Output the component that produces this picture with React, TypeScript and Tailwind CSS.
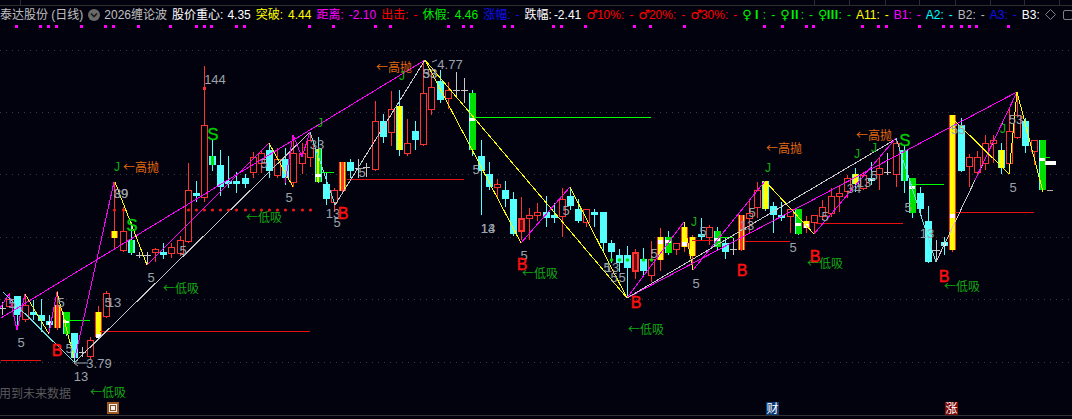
import React from "react";

type Kind = "r" | "c" | "x" | "w" | "Y" | "g" | "y" | "yc" | "cg" | "R" | "gy";
type Candle = [number, number, number, number, number, Kind, number?];

const RED = "#ff3232";
const CYAN = "#54ffff";
const YEL = "#ffff00";
const GRN = "#00e000";
const MAG = "#ff00ff";
const GREY = "#c8c8c8";

const candles: Candle[] = [
  [2, 302, 308, 308, 315, "x"], [9, 293, 299, 306, 308, "r"], [17, 296, 296, 315, 330, "c"], [25, 295, 305, 319, 322, "r"],
  [33, 300, 312, 315, 320, "c"], [41, 299, 315, 321, 332, "c"], [49, 315, 321, 325, 333, "w"], [57, 291, 305, 328, 330, "Y"],
  [66, 312, 312, 334, 336, "g", 320], [74, 333, 333, 358, 362, "c"], [82, 347, 352, 352, 357, "x"], [90, 337, 340, 356, 360, "r"],
  [98, 306, 312, 337, 340, "y", 334], [106, 291, 293, 316, 318, "r"], [114, 182, 231, 238, 248, "y"], [123, 207, 231, 250, 252, "r"],
  [131, 222, 240, 253, 255, "cg"], [139, 252, 255, 255, 258, "x"], [147, 252, 255, 255, 264, "x"], [155, 248, 249, 252, 262, "r"],
  [163, 243, 252, 255, 259, "c"], [171, 243, 247, 253, 258, "r"], [180, 236, 240, 253, 256, "r"], [188, 163, 190, 241, 243, "r"],
  [196, 181, 193, 196, 202, "c"], [204, 66, 125, 197, 202, "r"], [212, 140, 156, 165, 171, "cg"], [220, 150, 165, 187, 196, "c"],
  [228, 156, 181, 184, 188, "c"], [236, 172, 181, 184, 193, "c"], [245, 174, 178, 184, 188, "c"], [253, 152, 157, 172, 178, "r"],
  [261, 150, 153, 163, 173, "r"], [269, 143, 150, 171, 178, "c"], [277, 148, 159, 175, 178, "r"], [285, 148, 159, 178, 185, "c"],
  [293, 135, 153, 182, 187, "r"], [302, 143, 153, 163, 174, "r"], [310, 132, 140, 157, 167, "r"], [318, 137, 149, 182, 183, "gy", 174],
  [326, 173, 184, 199, 205, "c"], [334, 188, 190, 202, 212, "r"], [342, 162, 162, 191, 192, "Y"], [350, 159, 162, 171, 178, "c"],
  [358, 159, 168, 168, 178, "x"], [366, 163, 167, 167, 177, "x"], [375, 101, 121, 169, 171, "r"], [383, 114, 121, 137, 143, "c"],
  [391, 91, 109, 132, 146, "r"], [399, 90, 106, 150, 156, "yc"], [407, 119, 143, 153, 156, "r"], [415, 121, 131, 140, 150, "c"],
  [423, 60, 93, 144, 146, "r"], [431, 70, 87, 109, 115, "r"], [440, 70, 81, 100, 103, "c"], [448, 82, 90, 98, 109, "r"],
  [456, 72, 90, 90, 98, "x"], [464, 78, 90, 90, 103, "x"], [472, 90, 93, 150, 156, "g", 118], [481, 140, 156, 171, 215, "c"],
  [489, 162, 174, 187, 190, "c"], [497, 179, 184, 187, 199, "r"], [505, 181, 190, 199, 207, "c"], [513, 192, 199, 234, 236, "c"],
  [521, 197, 218, 232, 240, "R"], [529, 208, 215, 218, 240, "r"], [537, 203, 212, 215, 221, "r"], [546, 196, 212, 218, 227, "c"],
  [554, 203, 215, 218, 223, "c"], [562, 188, 199, 216, 237, "r"], [570, 187, 196, 206, 210, "c"], [578, 199, 209, 221, 223, "c"],
  [586, 209, 209, 222, 227, "r"], [594, 209, 212, 215, 227, "c"], [603, 212, 212, 243, 253, "c"], [611, 240, 243, 252, 263, "c"],
  [619, 249, 255, 263, 272, "c"], [627, 246, 255, 268, 298, "c"], [635, 249, 252, 272, 279, "R"], [643, 248, 259, 271, 275, "c"],
  [651, 241, 259, 275, 282, "r"], [660, 228, 237, 260, 271, "y", 240], [668, 231, 237, 253, 255, "g", 240], [676, 243, 243, 249, 255, "r"],
  [684, 222, 227, 247, 252, "y", 242], [692, 235, 237, 256, 270, "y"], [701, 218, 234, 237, 240, "c"], [709, 225, 227, 237, 245, "r"],
  [717, 227, 231, 247, 250, "g", 238], [725, 237, 243, 252, 259, "c"], [733, 238, 249, 249, 255, "x"], [741, 215, 215, 250, 251, "Y"],
  [749, 200, 213, 218, 233, "r"], [757, 182, 190, 207, 218, "r"], [765, 181, 181, 209, 211, "yc"], [773, 202, 206, 215, 233, "c"],
  [781, 202, 215, 218, 221, "c"], [790, 209, 209, 216, 233, "r"], [798, 209, 209, 234, 235, "g", 223], [806, 216, 221, 228, 233, "y", 224],
  [814, 215, 215, 222, 234, "r"], [822, 200, 207, 216, 220, "r"], [831, 188, 196, 213, 217, "r"], [839, 185, 193, 196, 212, "r"],
  [847, 175, 178, 191, 198, "r"], [855, 168, 174, 184, 192, "yc"], [863, 172, 175, 188, 190, "r"], [871, 162, 178, 181, 185, "w"],
  [879, 158, 168, 174, 190, "r"], [887, 153, 172, 172, 175, "x"], [896, 138, 143, 174, 187, "r"], [904, 145, 150, 181, 193, "cg"],
  [912, 178, 178, 213, 218, "g", 186], [920, 187, 193, 209, 215, "c"], [928, 206, 221, 262, 263, "c"], [936, 240, 250, 250, 262, "x"],
  [944, 237, 242, 246, 255, "w"], [952, 115, 115, 250, 252, "y", 214], [961, 118, 125, 171, 172, "c"], [969, 154, 157, 166, 187, "r"],
  [977, 151, 157, 172, 174, "r"], [985, 135, 143, 163, 170, "r"], [993, 135, 140, 143, 163, "r"], [1001, 143, 150, 168, 174, "yc"],
  [1009, 108, 131, 163, 165, "r"], [1017, 92, 115, 137, 139, "r"], [1025, 118, 121, 146, 153, "c"], [1034, 140, 140, 151, 165, "r"],
  [1042, 140, 140, 190, 191, "g", 158],
];

const lines: [string, string][] = [
  ["0,308 9,294 17,330 25,294", MAG],
  ["25,294 49,334", YEL], ["49,333 57,292", MAG], ["57,292 74,358", YEL],
  ["3,292 74,362", "#6fe0e0"],
  ["1,318 425,60", MAG],
  ["75,358 114,182", MAG],
  ["115,182 147,265", YEL],
  ["75,362 310,132", GREY],
  ["147,265 269,143", MAG],
  ["269,143 293,187", YEL],
  ["285,183 293,135 302,157 310,132", MAG],
  ["310,132 335,205", "#6fe0e0"],
  ["335,205 425,60", GREY],
  ["425,60 521,243", YEL],
  ["425,60 627,298", YEL],
  ["521,243 570,187", MAG],
  ["570,187 627,298", YEL],
  ["627,298 684,222", MAG],
  ["684,222 693,270", YEL],
  ["693,270 765,181", MAG],
  ["627,298 1017,92", MAG],
  ["627,298 896,139", GREY],
  ["765,181 814,234", YEL],
  ["814,234 896,138", MAG],
  ["896,138 936,262", "#6fe0e0"],
  ["936,262 1017,92", GREY],
  ["975,180 1017,92", MAG],
  ["1017,92 1043,192", YEL],
  ["952,118 1009,174", YEL],
  ["1009,174 1017,92", YEL],
];

const HRED = "#e81010";
const HGRN = "#00ff00";
const hlines: [number, number, number, string][] = [
  [1, 41, 360, HRED], [100, 310, 331, HRED], [66, 90, 320, HGRN], [322, 334, 172, HGRN],
  [347, 464, 179, HRED], [472, 651, 117, HGRN], [692, 713, 240, HRED], [745, 790, 241, HRED],
  [720, 733, 237, HGRN], [816, 903, 223, HRED],
  [912, 944, 184, HGRN], [955, 1034, 212, HRED], [1045, 1050, 157, HGRN], [1047, 1053, 190, "#b0b0b0"],
];

const nums: [string, number, number][] = [
  ["5", 21, 342], ["5", 12, 303], ["5", 61, 302], ["5", 69, 348], ["13", 81, 376], ["3.79", 99, 363], ["13", 114, 302], ["5", 108, 302],
  ["5", 151, 277], ["5", 183, 250], ["144", 215, 79], ["39", 121, 193], ["89", 121, 193], ["5", 264, 163], ["33", 317, 144], ["5", 289, 197],
  ["13", 333, 213], ["5", 337, 222], ["4.77", 450, 64], ["33", 430, 73], ["53", 430, 73], ["5", 362, 172], ["5", 476, 169],
  ["13", 488, 228], ["14", 488, 228], ["5", 566, 210], ["5", 524, 255], ["5", 607, 267], ["13", 612, 267], ["5", 614, 277], ["5", 622, 277],
  ["5", 654, 253], ["5", 703, 231], ["5", 696, 283], ["5", 752, 212], ["13", 747, 225], ["5", 793, 247], ["5", 825, 216],
  ["34", 854, 188], ["13", 864, 182], ["5", 874, 175], ["5", 908, 207], ["13", 927, 233], ["55", 958, 129], ["5", 1013, 187], ["53", 1016, 119],
];

const bees: [number, number][] = [[57, 350], [343, 213], [522, 264], [636, 302], [742, 270], [815, 256], [944, 276]];
const esses: [number, number][] = [[132, 225], [213, 134], [905, 140]];

const js: [number, number][] = [[117, 166], [320, 122], [402, 75], [694, 221], [768, 167], [857, 153], [874, 147], [1003, 128]];

const cjk: [string, number, number, string][] = [
  ["←低吸", 163, 289, "#12a812"], ["←低吸", 90, 393, "#12a812"], ["←高抛", 123, 168, "#e06a10"], ["←低吸", 246, 218, "#12a812"],
  ["←高抛", 376, 68, "#e06a10"], ["←低吸", 522, 274, "#12a812"], ["←低吸", 628, 330, "#12a812"], ["←高抛", 766, 149, "#e06a10"],
  ["←低吸", 807, 264, "#12a812"], ["←高抛", 856, 136, "#e06a10"], ["←低吸", 944, 287, "#12a812"],
];

const redDots = [114, 123, 188, 196, 204, 212, 220, 228, 236, 245, 253, 261, 269, 277, 285, 293, 302, 310];
const greenDots = [611, 619, 627, 643, 651];
const grid = [50, 112, 174, 237, 299, 362];

const topDots = [
  ...[47, 117, 140, 163, 236, 306, 329, 402, 494, 568, 591, 614, 684, 710, 898, 968, 1088, 1134, 1300, 1346, 1369, 1465, 1488].map((v) => v / 2.904),
  ...[62, 85, 155, 297, 344, 440, 675, 725, 795, 817, 959, 1005, 1028, 1125, 1193, 1218, 1245, 1268, 1290, 1383].map((v) => 532 + v / 2.904),
];
const ticks = [20, 814, 849, 885, 919, 955, 990, 1024, 1059];

function CandleMark({ c }: { c: Candle }) {
  const [x, h, t, b, l, k, w] = c;
  const left = x - 3;
  const ht = Math.max(b - t, 1);
  const wick = k === "r" || k === "R" || k === "Y" || k === "y" ? RED : k === "x" ? GREY : CYAN;
  const body = () => {
    switch (k) {
      case "x":
        return <rect x={left} y={t} width={7} height={1} fill={GREY} />;
      case "r":
        return <rect x={left + 0.5} y={t + 0.5} width={6} height={ht} fill="#02020e" stroke={RED} />;
      case "c":
        return <rect x={left} y={t} width={7} height={ht} fill={CYAN} />;
      case "w":
        return (
          <>
            <rect x={left} y={t} width={7} height={ht} fill={CYAN} />
            <rect x={left + 2} y={t + 1} width={3} height={Math.max(ht - 1, 1)} fill="#ffffff" />
          </>
        );
      case "Y":
        return (
          <>
            <rect x={left} y={t} width={7} height={ht} fill={RED} />
            <rect x={left + 1} y={t} width={1} height={ht} fill={YEL} />
            <rect x={left + 5} y={t} width={1} height={ht} fill={YEL} />
          </>
        );
      case "R":
        return (
          <>
            <rect x={left} y={t} width={7} height={ht} fill={RED} />
            <rect x={left + 2} y={t + 2} width={3} height={ht - 4} fill="#700808" />
          </>
        );
      case "y":
        return (
          <>
            <rect x={left} y={t} width={7} height={ht} fill={RED} />
            <rect x={left + 1} y={t} width={5} height={ht} fill={YEL} />
            {w ? <rect x={left + 1} y={w} width={5} height={4} fill="#ffffff" /> : null}
          </>
        );
      case "yc":
        return (
          <>
            <rect x={left} y={t} width={7} height={ht} fill={CYAN} />
            <rect x={left + 1} y={t} width={5} height={ht} fill={YEL} />
          </>
        );
      case "cg":
        return (
          <>
            <rect x={left} y={t} width={7} height={ht} fill={CYAN} />
            <rect x={left + 2} y={t} width={3} height={ht} fill={GRN} />
          </>
        );
      case "g":
        return (
          <>
            <rect x={left} y={t} width={7} height={ht} fill={CYAN} />
            <rect x={left + 1} y={t} width={6} height={ht} fill={GRN} />
            {w ? <rect x={left} y={w} width={6} height={3} fill="#ffffff" /> : null}
          </>
        );
      case "gy":
        return (
          <>
            <rect x={left} y={t} width={7} height={ht} fill={CYAN} />
            <rect x={left + 1} y={t} width={5} height={ht} fill={GRN} />
            <rect x={left + 2} y={t} width={2} height={ht} fill={YEL} />
            {w ? <rect x={left} y={w} width={6} height={3} fill="#ffffff" /> : null}
          </>
        );
    }
  };
  return (
    <g>
      <rect x={x} y={h} width={1} height={l - h} fill={wick} />
      {body()}
    </g>
  );
}

function Label({ cls, children }: { cls: string; children: React.ReactNode }) {
  return <span className={`whitespace-pre ${cls}`}>{children}</span>;
}

function Sym({ children }: { children: React.ReactNode }) {
  return <span className="font-['DejaVu_Sans'] text-[13px] mr-[-1px]">{children}</span>;
}

function Roman({ children }: { children: React.ReactNode }) {
  return <span className="font-['Noto_Sans_CJK_SC'] font-bold">{children}</span>;
}

export default function App() {
  return (
    <div className="w-[1072px] h-[419px] bg-[#02020e] overflow-hidden flex flex-col font-['Liberation_Sans','Noto_Sans_CJK_SC',sans-serif] text-[12px] leading-none">
      <div className="relative h-[30px] shrink-0 pt-[5px]">
        <svg className="absolute left-0 top-0" width={1072} height={30}>
          <g shapeRendering="crispEdges">
            <rect x={0} y={5} width={1072} height={1} fill="#2e2e2e" />
            {ticks.map((x) => (
              <rect key={x} x={x} y={0} width={1} height={5} fill="#2e2e2e" />
            ))}
            {topDots.map((x, i) => (
              <rect key={i} x={Math.round(x) - 1} y={25} width={3} height={3} fill="#ff00ff" />
            ))}
          </g>
        </svg>
        <div className="relative flex items-center gap-[5px] h-[19px] whitespace-nowrap">
          <Label cls="text-[#c0c0c0]">泰达股份 (日线)</Label>
          <svg width={12} height={12} viewBox="0 0 12 12" className="shrink-0 mr-[-1px]">
            <circle cx={6} cy={6} r={6} fill="#6a6a6a" />
            <path d="M3 4.5 L6 7.5 L9 4.5" stroke="#1a1a1a" strokeWidth={1.6} fill="none" />
          </svg>
          <Label cls="text-[#c0c0c0]">2026缠论波</Label>
          <Label cls="text-white">股价重心:</Label>
          <Label cls="text-white ml-[-1px]">4.35</Label>
          <Label cls="text-[#ffff00]">突破:</Label>
          <Label cls="text-[#ffff00]">4.44</Label>
          <Label cls="text-[#ff00ff]">距离:</Label>
          <Label cls="text-[#ff00ff]">-2.10</Label>
          <Label cls="text-[#ff0000]">出击:</Label>
          <Label cls="text-[#ff0000]">-</Label>
          <Label cls="text-[#00ee00]">休假:</Label>
          <Label cls="text-[#00ee00]">4.46</Label>
          <Label cls="text-[#1010e8]">涨幅:</Label>
          <Label cls="text-[#1010e8]">-</Label>
          <Label cls="text-white">跌幅:</Label>
          <Label cls="text-white ml-[-3px]">-2.41</Label>
          <Label cls="text-[#ff0000]"><Sym>♂</Sym>10%:</Label>
          <Label cls="text-[#ff0000]">-</Label>
          <Label cls="text-[#ff0000]"><Sym>♂</Sym>20%:</Label>
          <Label cls="text-[#ff0000]">-</Label>
          <Label cls="text-[#ff0000]"><Sym>♂</Sym>30%:</Label>
          <Label cls="text-[#ff0000]">-</Label>
          <Label cls="text-[#00ee00] w-[24px]"><Sym>♀</Sym><Roman>Ⅰ</Roman>:</Label>
          <Label cls="text-[#00ee00]">-</Label>
          <Label cls="text-[#00ee00] w-[24px]"><Sym>♀</Sym><Roman>Ⅱ</Roman>:</Label>
          <Label cls="text-[#00ee00]">-</Label>
          <Label cls="text-[#00ee00] w-[26px]"><Sym>♀</Sym><Roman>Ⅲ</Roman>:</Label>
          <Label cls="text-[#00ee00]">-</Label>
          <Label cls="text-[#ffff00]">A11:</Label>
          <Label cls="text-[#ffff00]">-</Label>
          <Label cls="text-[#ff00ff]">B1:</Label>
          <Label cls="text-[#ff00ff]">-</Label>
          <Label cls="text-[#00ffff]">A2:</Label>
          <Label cls="text-[#00ffff]">-</Label>
          <Label cls="text-[#b8b8b8]">B2:</Label>
          <Label cls="text-[#b8b8b8]">-</Label>
          <Label cls="text-[#1010e8]">A3:</Label>
          <Label cls="text-[#1010e8]">-</Label>
          <Label cls="text-white">B3:</Label>
          <svg width={11} height={11} viewBox="0 0 11 11" className="shrink-0">
            <path d="M5.5 0.5 L10.5 5.5 L5.5 10.5 L0.5 5.5 Z" stroke="#808080" fill="none" />
          </svg>
          <div className="ml-[2px] w-[10px] h-[10px] rounded-[2px] border border-[#808080] shrink-0" />
        </div>
      </div>
      <svg className="flex-1 block" width={1072} height={389} viewBox="0 30 1072 389">
        <g shapeRendering="crispEdges">
          {grid.map((y) => (
            <line key={y} x1={0} x2={1072} y1={y + 0.5} y2={y + 0.5} stroke="#3c3c3c" strokeDasharray="1 5" />
          ))}
          {candles.map((c, i) => (
            <CandleMark key={i} c={c} />
          ))}
          {hlines.map(([a, b, y, col], i) => (
            <rect key={i} x={a} y={y} width={b - a} height={1} fill={col} />
          ))}
          {lines.map(([pts, col], i) => (
            <polyline key={i} points={pts} fill="none" stroke={col} strokeWidth={1} />
          ))}
          <rect x={1045} y={161} width={11} height={4} fill="#ffffff" />
          <rect x={203} y={87} width={3} height={3} fill={RED} />
        </g>
        {redDots.map((x) => (
          <circle key={x} cx={x + 0.5} cy={210} r={1.6} fill="#f01818" />
        ))}
        {greenDots.map((x) => (
          <circle key={x} cx={x + 0.5} cy={260} r={1.8} fill="#00e000" />
        ))}
        <path d="M437 60 L432 62" stroke="#a0a8b0" fill="none" />
        <path d="M74 363 L88 363 M78 360 L74 363 L78 366" stroke="#a0a8b0" fill="none" />
        {nums.map(([t, x, y], i) => (
          <text key={i} x={x} y={y + 5} textAnchor="middle" fontSize={13} fill="#9aa2aa" fontFamily="Liberation Sans">
            {t}
          </text>
        ))}
        {cjk.map(([t, x, y, col], i) => (
          <text key={i} x={x} y={y + 4} fontSize={12} fill={col} fontFamily="Noto Sans CJK SC">
            {t}
          </text>
        ))}
        {bees.map(([x, y], i) => (
          <text key={i} x={x} y={y + 6} textAnchor="middle" fontSize={16} fill="#ff1010" stroke="#ff1010" strokeWidth={0.4} fontFamily="Liberation Sans">
            B
          </text>
        ))}
        {esses.map(([x, y], i) => (
          <text key={i} x={x} y={y + 6} textAnchor="middle" fontSize={17} fill="#00d000" stroke="#00d000" strokeWidth={0.3} fontFamily="Liberation Sans">
            S
          </text>
        ))}
        {js.map(([x, y], i) => (
          <text key={i} x={x} y={y + 5} textAnchor="middle" fontSize={12} fill="#10b010" fontFamily="Liberation Sans">
            J
          </text>
        ))}
        <text x={-1} y={398} fontSize={12} fill="#5a5a5a" fontFamily="Noto Sans CJK SC">
          用到未来数据
        </text>
        <g shapeRendering="crispEdges">
          <rect x={107} y={402} width={12} height={12} fill="#a05a20" />
          <rect x={109} y={404} width={8} height={8} fill="#f0f0f0" />
          <rect x={110} y={405} width={6} height={6} fill="#7a4a20" />
          <rect x={111} y={406} width={4} height={4} fill="#f0f0f0" />
          <rect x={766} y={402} width={13} height={13} fill="#0c3a74" />
          <rect x={945} y={402} width={13} height={13} fill="#7a0808" />
          <rect x={0} y={415} width={1072} height={1} fill="#333333" />
        </g>
        <text x={772.5} y={412.5} textAnchor="middle" fontSize={12} fill="#ffffff" fontFamily="Noto Sans CJK SC">
          财
        </text>
        <text x={951.5} y={412.5} textAnchor="middle" fontSize={12} fill="#ffffff" fontFamily="Noto Sans CJK SC">
          涨
        </text>
      </svg>
    </div>
  );
}
